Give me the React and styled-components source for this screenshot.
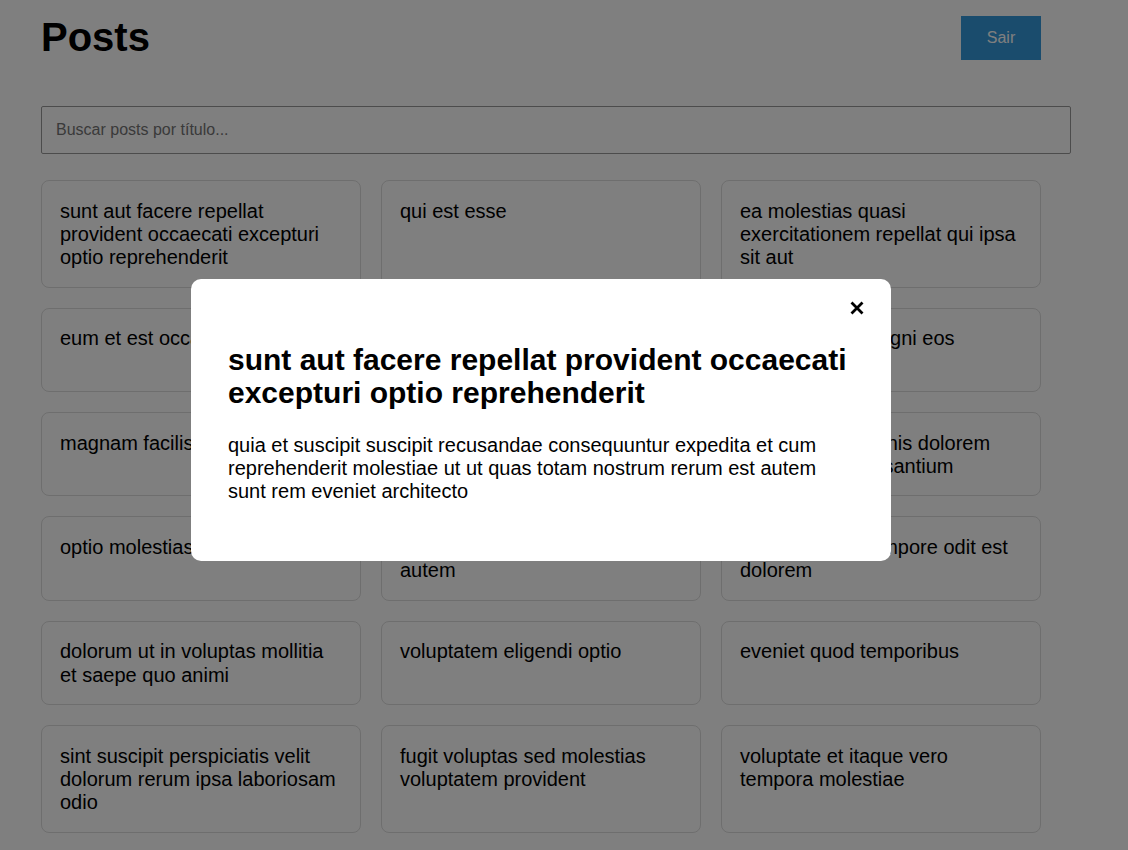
import React, { useState } from "react";
import styled, { createGlobalStyle } from "styled-components";

const GlobalStyle = createGlobalStyle`
  * { box-sizing: border-box; }
  body {
    margin: 0;
    background: #ffffff;
    font-family: "Liberation Sans", Arial, sans-serif;
    font-size: 20px;
    color: #000;
  }
`;

const posts = [
  { id: 1, title: "sunt aut facere repellat provident occaecati excepturi optio reprehenderit" },
  { id: 2, title: "qui est esse" },
  { id: 3, title: "ea molestias quasi exercitationem repellat qui ipsa sit aut" },
  { id: 4, title: "eum et est occaecati" },
  { id: 5, title: "nesciunt quas odio" },
  { id: 6, title: "dolorem eum magni eos aperiam quia" },
  { id: 7, title: "magnam facilis autem" },
  { id: 8, title: "dolorem dolore est ipsam" },
  { id: 9, title: "nesciunt iure omnis dolorem tempora et accusantium" },
  { id: 10, title: "optio molestias id quia eum" },
  { id: 11, title: "et ea vero quia laudantium autem" },
  { id: 12, title: "in quibusdam tempore odit est dolorem" },
  { id: 13, title: "dolorum ut in voluptas mollitia et saepe quo animi" },
  { id: 14, title: "voluptatem eligendi optio" },
  { id: 15, title: "eveniet quod temporibus" },
  { id: 16, title: "sint suscipit perspiciatis velit dolorum rerum ipsa laboriosam odio" },
  { id: 17, title: "fugit voluptas sed molestias voluptatem provident" },
  { id: 18, title: "voluptate et itaque vero tempora molestiae" },
  { id: 19, title: "adipisci placeat illum aut reiciendis qui" },
  { id: 20, title: "doloribus ad provident suscipit at" },
  { id: 21, title: "asperiores ea ipsam voluptatibus modi minima quia sint" },
];

const selectedBody =
  "quia et suscipit suscipit recusandae consequuntur expedita et cum reprehenderit molestiae ut ut quas totam nostrum rerum est autem sunt rem eveniet architecto";

const App = () => {
  const [search, setSearch] = useState("");
  const [open, setOpen] = useState(true);

  const filtered = posts.filter((p) =>
    p.title.toLowerCase().includes(search.toLowerCase())
  );

  return (
    <>
      <GlobalStyle />
      <Page>
        <Header>
          <Title>Posts</Title>
          <LogoutButton>Sair</LogoutButton>
        </Header>
        <SearchInput
          placeholder="Buscar posts por título..."
          value={search}
          onChange={(e) => setSearch(e.target.value)}
        />
        <Grid>
          {filtered.map((post) => (
            <Card key={post.id} onClick={() => setOpen(true)}>
              {post.title}
            </Card>
          ))}
        </Grid>
      </Page>
      {open && (
        <Overlay>
          <Modal>
            <CloseButton onClick={() => setOpen(false)} aria-label="Fechar">
              <svg width="14" height="14" viewBox="0 0 14 14">
                <path
                  d="M1.5 1.5 L12.5 12.5 M12.5 1.5 L1.5 12.5"
                  stroke="#000"
                  strokeWidth="2.8"
                  strokeLinecap="butt"
                />
              </svg>
            </CloseButton>
            <ModalTitle>{posts[0].title}</ModalTitle>
            <ModalBody>{selectedBody}</ModalBody>
          </Modal>
        </Overlay>
      )}
    </>
  );
};

export default App;

const Page = styled.div`
  width: 1041px;
  padding: 15px 0 40px 41px;
`;

const Header = styled.header`
  display: flex;
  justify-content: space-between;
  align-items: center;
  margin-bottom: 46px;
`;

const Title = styled.h1`
  margin: 0;
  font-size: 40px;
  font-weight: 700;
`;

const LogoutButton = styled.button`
  width: 80px;
  height: 44px;
  border: none;
  background: #3498db;
  color: #fff;
  font-family: inherit;
  font-size: 16px;
  cursor: pointer;
`;

const SearchInput = styled.input`
  display: block;
  box-sizing: content-box;
  width: 100%;
  height: 18px;
  padding: 14px;
  margin: 0 0 26px;
  border: 1px solid #999;
  border-radius: 2px;
  font-family: inherit;
  font-size: 16px;
  background: #fff;
  outline: none;
  &::placeholder {
    color: #757575;
  }
`;

const Grid = styled.div`
  display: grid;
  grid-template-columns: repeat(3, 320px);
  gap: 20px;
`;

const Card = styled.div`
  padding: 18.5px 18px 17.5px;
  border: 1px solid #ddd;
  border-radius: 8px;
  background: #fff;
  line-height: 23.2px;
  cursor: pointer;
`;

const Overlay = styled.div`
  position: fixed;
  inset: 0;
  display: flex;
  align-items: center;
  justify-content: center;
  padding: 0 46px 11px 0;
  background: rgba(0, 0, 0, 0.5);
`;

const Modal = styled.div`
  position: relative;
  width: 700px;
  padding: 36px 36px 36px 37px;
  background: #fff;
  border-radius: 10px;
`;

const CloseButton = styled.button`
  position: absolute;
  top: 17px;
  right: 22px;
  width: 24px;
  height: 24px;
  display: flex;
  align-items: center;
  justify-content: center;
  padding: 0;
  border: none;
  background: none;
  cursor: pointer;
`;

const ModalTitle = styled.h2`
  margin: 28px 0 25px;
  font-size: 30px;
  line-height: 33px;
  font-weight: 700;
`;

const ModalBody = styled.p`
  margin: 0 0 22px;
  line-height: 23px;
`;
